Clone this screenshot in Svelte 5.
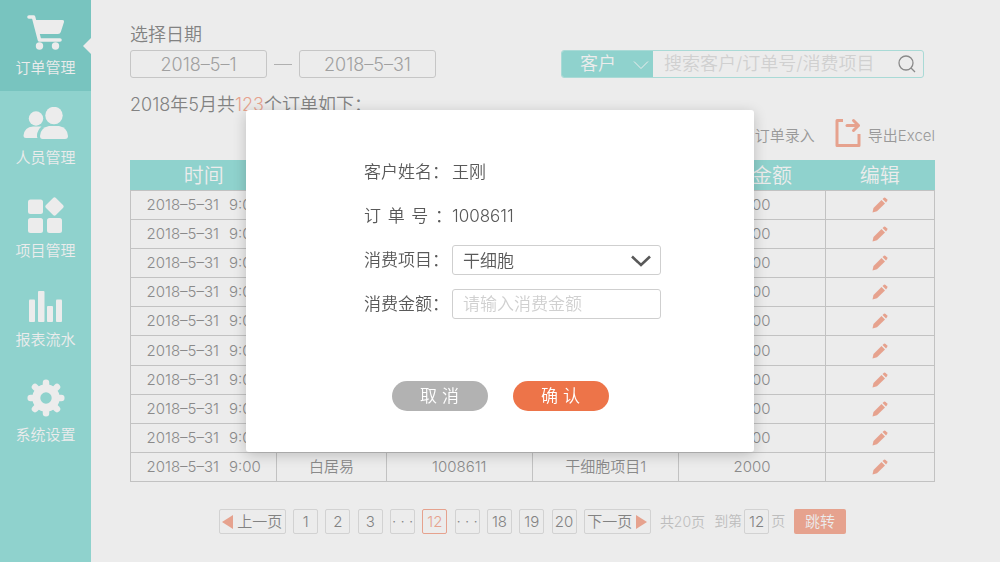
<script lang="ts">
  const menu = [
    { id: "orders", label: "订单管理" },
    { id: "people", label: "人员管理" },
    { id: "projects", label: "项目管理" },
    { id: "reports", label: "报表流水" },
    { id: "settings", label: "系统设置" },
  ];

  const columns = ["时间", "客户", "订单号", "消费项目", "消费金额", "编辑"];

  const orders = Array.from({ length: 10 }, () => ({
    date: "2018–5–31",
    time: "9:00",
    customer: "白居易",
    number: "1008611",
    project: "干细胞项目1",
    amount: 2000,
  }));

  const pages = ["1", "2", "3", "· · ·", "12", "· · ·", "18", "19", "20"];

  let active = $state("orders");
  let startDate = $state("2018–5–1");
  let endDate = $state("2018–5–31");
  let searchType = $state("客户");
  let keyword = $state("");
  let currentPage = $state("12");
  let jumpTo = $state("12");
  let showModal = $state(true);
  let project = $state("干细胞");
  let amount = $state("");

  function closeModal() {
    showModal = false;
  }
</script>

<div class="layout">
  <nav class="sidebar">
    {#each menu as item}
      <a
        href="#{item.id}"
        class="menu-item"
        class:active={active === item.id}
        onclick={() => (active = item.id)}
      >
        {#if item.id === "orders"}
          <svg width="38" height="36" viewBox="0 0 38 36" fill="none">
            <path d="M2 3h4.500L12.500 26H33" stroke="currentColor" stroke-width="3.600" stroke-linecap="round" stroke-linejoin="round" />
            <path d="M8 6H35.500Q37.500 6 37 8L33.800 18Q33.200 20 31 20H12Z" fill="currentColor" />
            <circle cx="12.500" cy="32" r="3.700" fill="currentColor" />
            <circle cx="28.500" cy="32" r="3.700" fill="currentColor" />
          </svg>
        {:else if item.id === "people"}
          <svg width="46" height="33" viewBox="0 0 46 33" fill="currentColor">
            <circle cx="13" cy="11.500" r="7.200" />
            <path d="M10 19.500H18.500Q14.500 23 14 28Q13.800 30 14.500 31H3Q.5 31 .5 28.500Q1.500 20 10 19.500Z" />
            <circle cx="31" cy="8.500" r="8.700" />
            <path d="M26 19H36Q44.500 20.500 45 29Q45 32 42 32H19.500Q17 32 17 29Q17.500 20.500 26 19Z" />
          </svg>
        {:else if item.id === "projects"}
          <svg width="36" height="36" viewBox="0 0 36 36" fill="currentColor">
            <rect x="0" y="2.500" width="15" height="14.500" rx="2.500" />
            <rect x="0" y="21" width="15" height="15" rx="2.500" />
            <rect x="19" y="21" width="15" height="15" rx="2.500" />
            <rect x="19.500" y="2.500" width="14" height="14" rx="2" transform="rotate(45 26.500 9.500)" />
          </svg>
        {:else if item.id === "reports"}
          <svg width="34" height="32" viewBox="0 0 34 32" fill="currentColor">
            <rect x="0" y="9.500" width="6" height="22.500" rx="1" />
            <rect x="9" y="1" width="6.500" height="31" rx="1" />
            <rect x="18" y="16" width="6" height="16" rx="1" />
            <rect x="27" y="9.500" width="6" height="22.500" rx="1" />
          </svg>
        {:else}
          <svg width="38" height="38" viewBox="-19 -19 38 38" fill="none" stroke="currentColor">
            <circle r="9.700" stroke-width="8" />
            <path
              d="M0-14V-15.300M0 14V15.300M-14 0H-15.300M14 0H15.300M-10-10L-11-11M10-10L11-11M-10 10L-11 11M10 10L11 11"
              stroke-width="6.500"
              stroke-linecap="round"
            />
          </svg>
        {/if}
        <span>{item.label}</span>
      </a>
    {/each}
  </nav>

  <main>
    <div class="filters">
      <div class="dates">
        <label for="start">选择日期</label>
        <div class="range">
          <input id="start" type="text" bind:value={startDate} />
          <span class="dash"></span>
          <input type="text" aria-label="结束日期" bind:value={endDate} />
        </div>
      </div>

      <form class="search">
        <div class="search-type">
          <select aria-label="搜索类型" bind:value={searchType}>
            <option>客户</option>
            <option>订单号</option>
            <option>消费项目</option>
          </select>
          <svg width="16" height="10" viewBox="0 0 16 10" fill="none" stroke="currentColor">
            <path d="M1 1.500L8 8.500L15 1.500" />
          </svg>
        </div>
        <input
          type="text"
          aria-label="搜索"
          placeholder="搜索客户/订单号/消费项目"
          bind:value={keyword}
        />
        <button type="button" aria-label="搜索">
          <svg width="18" height="18" viewBox="0 0 18 18" fill="none" stroke="currentColor" stroke-width="1.300">
            <circle cx="8" cy="8" r="7" />
            <path d="M13 13L17 17" />
          </svg>
        </button>
      </form>
    </div>

    <div class="toolbar">
      <p>2018年5月共<em>123</em>个订单如下：</p>
      <div class="actions">
        <button type="button" onclick={() => (showModal = true)}>订单录入</button>
        <button type="button">
          <svg width="26" height="30" viewBox="0 0 26 30" fill="none" stroke="#e6a28e" stroke-width="3" stroke-linejoin="round">
            <path d="M8 2.500H2V27.500H24V16" />
            <path d="M12 7.500H23" stroke-linecap="round" />
            <path d="M18.500 2.500L23.500 7.500L18.500 12.500" stroke-linecap="round" />
          </svg>
          导出Excel
        </button>
      </div>
    </div>

    <table>
      <colgroup>
        <col class="wide" /><col class="narrow" /><col class="wide" />
        <col class="wide" /><col class="wide" /><col class="narrow" />
      </colgroup>
      <thead>
        <tr>
          {#each columns as column}
            <th>{column}</th>
          {/each}
        </tr>
      </thead>
      <tbody>
        {#each orders as order}
          <tr>
            <td><span class="date">{order.date}</span>{order.time}</td>
            <td>{order.customer}</td>
            <td>{order.number}</td>
            <td>{order.project}</td>
            <td>{order.amount}</td>
            <td>
              <button type="button" class="edit" aria-label="编辑" onclick={() => (showModal = true)}>
                <svg width="16" height="16" viewBox="0 0 16 16" fill="currentColor">
                  <path d="M.5 15.500L1.500 11L9.500 3L13 6.500L5 14.300Z" />
                  <path d="M10.500 2L12 .8Q12.800.2 13.600.9L15 2.300Q15.800 3.200 15.200 4L14 5.500Z" />
                </svg>
              </button>
            </td>
          </tr>
        {/each}
      </tbody>
    </table>

    <div class="pagination">
      <div class="pages">
        <button type="button" class="step">
          <svg width="11" height="14" viewBox="0 0 11 14" fill="#e6a28e"><path d="M0 7L11 0V14Z" /></svg>
          上一页
        </button>
        {#each pages as page}
          <button
            type="button"
            class:current={page === currentPage}
            onclick={() => (currentPage = page)}>{page}</button
          >
        {/each}
        <button type="button" class="step">
          下一页
          <svg width="11" height="14" viewBox="0 0 11 14" fill="#e6a28e"><path d="M11 7L0 0V14Z" /></svg>
        </button>
      </div>
      <span class="total">共20页</span>
      <label class="jump">到第<input type="text" bind:value={jumpTo} />页</label>
      <button type="button" class="go">跳转</button>
    </div>
  </main>
</div>

{#if showModal}
  <div class="overlay">
    <form class="modal" role="dialog" aria-label="订单录入">
      <div class="fields">
        <div class="field">
          <span class="name">客户姓名：</span>
          <span>王刚</span>
        </div>
        <div class="field">
          <span class="name spread"><i>订</i><i>单</i><i>号</i><i>：</i></span>
          <span>1008611</span>
        </div>
        <div class="field">
          <label class="name" for="project">消费项目：</label>
          <div class="select">
            <select id="project" bind:value={project}>
              <option>干细胞</option>
              <option>干细胞项目1</option>
            </select>
            <svg width="20" height="12" viewBox="0 0 20 12" fill="none" stroke="currentColor" stroke-width="2.600">
              <path d="M1 1.500L10 10L19 1.500" />
            </svg>
          </div>
        </div>
        <div class="field">
          <label class="name" for="amount">消费金额：</label>
          <input id="amount" type="text" placeholder="请输入消费金额" bind:value={amount} />
        </div>
      </div>
      <div class="buttons">
        <button type="button" onclick={closeModal}>取 消</button>
        <button type="button" class="confirm" onclick={closeModal}>确 认</button>
      </div>
    </form>
  </div>
{/if}

<style>
  :global(body) {
    margin: 0;
    background: #ececec;
  }

  :global(#app) {
    font-family: "Inter", "Noto Sans CJK SC", sans-serif;
    font-weight: 350;
    color: #828282;
  }

  * {
    box-sizing: border-box;
  }

  button,
  input,
  select {
    margin: 0;
    padding: 0;
    border: none;
    background: none;
    font: inherit;
    color: inherit;
    outline: none;
    min-width: 0;
  }

  button {
    cursor: pointer;
    white-space: nowrap;
  }

  select {
    appearance: none;
    width: 100%;
    height: 100%;
  }

  svg {
    display: block;
    flex-shrink: 0;
  }

  .layout {
    display: flex;
    min-height: 100vh;
  }

  .sidebar {
    width: 91px;
    flex-shrink: 0;
    background: #8fd2cd;
  }

  .menu-item {
    position: relative;
    display: flex;
    flex-direction: column;
    align-items: center;
    gap: 8px;
    padding: 16px 0 13px;
    color: #ececec;
    font-size: 15px;
    line-height: 20px;
    text-decoration: none;
  }

  .menu-item:first-child {
    padding-top: 14px;
  }

  .menu-item.active {
    background: #78c4bf;
  }

  .menu-item.active::after {
    content: "";
    position: absolute;
    right: 0;
    top: 38px;
    border: 8px solid transparent;
    border-right-color: #ececec;
    border-left: none;
  }

  main {
    flex: 1;
    min-width: 0;
    padding: 23px 65px 28px 39px;
  }

  .filters {
    display: flex;
    justify-content: space-between;
    align-items: flex-end;
    padding-right: 11px;
    font-size: 18px;
    line-height: 24px;
  }

  .dates label {
    display: block;
    margin-bottom: 3px;
  }

  .range {
    display: flex;
    align-items: center;
    gap: 7px;
  }

  .range input {
    width: 137px;
    height: 28px;
    border: 1px solid #c6c6c6;
    border-radius: 3px;
    text-align: center;
    color: #a0a0a0;
  }

  .dash {
    width: 18px;
    height: 1px;
    background: #b0b0b0;
  }

  .search {
    display: flex;
    width: 363px;
    height: 28px;
    border: 1px solid #a9dad6;
    border-radius: 3px;
    overflow: hidden;
  }

  .search-type {
    position: relative;
    width: 91px;
    background: #8fd2cd;
    color: #ececec;
  }

  .search-type select {
    padding-left: 18px;
  }

  .search-type svg {
    position: absolute;
    right: 4px;
    top: 9px;
    pointer-events: none;
  }

  .search input {
    flex: 1;
    padding-left: 11px;
  }

  .search input::placeholder {
    color: #d0d0d0;
    opacity: 1;
  }

  .search button {
    padding: 0 7px;
    color: #8a8a8a;
  }

  .toolbar {
    display: flex;
    justify-content: space-between;
    margin: 15px 0 12px;
    min-height: 55px;
    line-height: 24px;
  }

  .toolbar p {
    margin: 0;
    font-size: 18px;
  }

  .toolbar em {
    font-style: normal;
    color: #e6a28e;
  }

  .actions {
    display: flex;
    align-items: flex-end;
    gap: 20px;
  }

  .actions button {
    display: flex;
    align-items: flex-end;
    gap: 7px;
    height: 30px;
    font-size: 15px;
    color: #999;
  }

  table {
    width: 100%;
    height: 322px;
    border-collapse: collapse;
    table-layout: fixed;
    font-size: 15px;
    line-height: 20px;
    color: #8a8a8a;
  }

  .wide {
    width: 18.2%;
  }

  .narrow {
    width: 13.6%;
  }

  th {
    height: 30px;
    padding: 0;
    border: 1px solid #8fd2cd;
    border-bottom-color: #c2c2c2;
    background: #8fd2cd;
    color: #ececec;
    font-size: 20px;
    font-weight: 350;
  }

  td {
    padding: 0;
    border: 1px solid #c2c2c2;
    text-align: center;
  }

  .date {
    margin-right: 10px;
  }

  .edit {
    display: block;
    margin: 0 auto;
    color: #e6a28e;
  }

  .pagination {
    display: flex;
    justify-content: center;
    align-items: center;
    margin-top: 27px;
    font-size: 15px;
    line-height: 23px;
  }

  .pages {
    display: flex;
    justify-content: space-between;
    width: 432px;
  }

  .pages button,
  .jump input {
    width: 25px;
    height: 25px;
    border: 1px solid #d2d2d2;
    border-radius: 2px;
    text-align: center;
  }

  .pages .step {
    display: flex;
    align-items: center;
    justify-content: center;
    gap: 4px;
    width: 67px;
  }

  .pages .current {
    border-color: #e6a28e;
    color: #e6a28e;
  }

  .total,
  .jump {
    margin-left: 9px;
    font-size: 14px;
    color: #bdbdbd;
  }

  .jump {
    display: flex;
    gap: 2px;
  }

  .jump input {
    font-size: 15px;
    color: #828282;
  }

  .go {
    width: 52px;
    height: 25px;
    margin-left: 9px;
    border-radius: 2px;
    background: #e6a28e;
    color: #ececec;
  }

  .overlay {
    position: fixed;
    inset: 0;
    display: flex;
    align-items: center;
    justify-content: center;
  }

  .modal {
    width: 508px;
    padding: 47px 0 41px;
    border-radius: 3px;
    background: #fff;
    box-shadow: 0 3px 14px rgba(0, 0, 0, 0.2);
    font-size: 17px;
    line-height: 30px;
    color: #595959;
  }

  .fields {
    display: flex;
    flex-direction: column;
    gap: 14px;
    padding: 0 93px 0 118px;
  }

  .field {
    display: flex;
  }

  .name {
    width: 88px;
    flex-shrink: 0;
  }

  .spread {
    display: flex;
    justify-content: space-between;
  }

  .spread i {
    font-style: normal;
  }

  .select,
  .field input {
    position: relative;
    flex: 1;
    height: 30px;
    border: 1px solid #cfcfcf;
    border-radius: 3px;
  }

  .select select,
  .field input {
    padding-left: 10px;
  }

  .select svg {
    position: absolute;
    right: 9px;
    top: 9px;
    pointer-events: none;
  }

  .field input::placeholder {
    color: #d0d0d0;
    opacity: 1;
  }

  .buttons {
    display: flex;
    justify-content: center;
    gap: 25px;
    margin-top: 62px;
  }

  .buttons button {
    width: 96px;
    height: 30px;
    border-radius: 15px;
    background: #b2b2b2;
    color: #fff;
  }

  .buttons .confirm {
    background: #ed7449;
  }
</style>
